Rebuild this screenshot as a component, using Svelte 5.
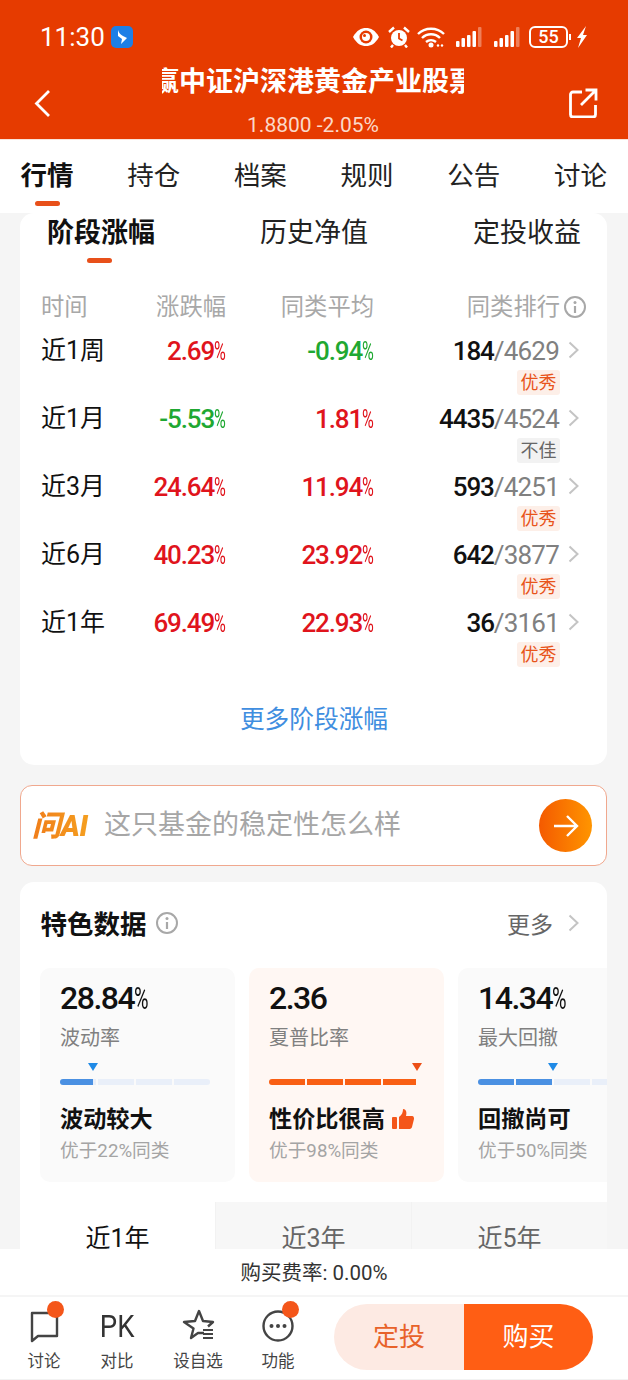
<script>
  const tabs = ['行情', '持仓', '档案', '规则', '公告', '讨论'];
  const subTabs = ['阶段涨幅', '历史净值', '定投收益'];
  const rows = [
    { t: '近1周', a: '2.69', au: 1, b: '-0.94', bu: 0, r: '184', n: '4629', tag: '优秀', good: 1 },
    { t: '近1月', a: '-5.53', au: 0, b: '1.81', bu: 1, r: '4435', n: '4524', tag: '不佳', good: 0 },
    { t: '近3月', a: '24.64', au: 1, b: '11.94', bu: 1, r: '593', n: '4251', tag: '优秀', good: 1 },
    { t: '近6月', a: '40.23', au: 1, b: '23.92', bu: 1, r: '642', n: '3877', tag: '优秀', good: 1 },
    { t: '近1年', a: '69.49', au: 1, b: '22.93', bu: 1, r: '36', n: '3161', tag: '优秀', good: 1 }
  ];
  const cards = [
    { v: '28.84', pct: 1, name: '波动率', mark: 33, fills: [93, 0, 0, 0], head: '波动较大', sub: '优于22%同类', hot: 0 },
    { v: '2.36', pct: 0, name: '夏普比率', mark: 148, fills: [100, 100, 100, 92], head: '性价比很高', sub: '优于98%同类', hot: 1 },
    { v: '14.34', pct: 1, name: '最大回撤', mark: 75, fills: [100, 100, 0, 0], head: '回撤尚可', sub: '优于50%同类', hot: 0 }
  ];
  const periods = ['近1年', '近3年', '近5年'];
</script>

{#snippet chevron()}
  <svg class="chev" viewBox="0 0 11 18" width="11" height="18"><path d="M1.5 1.5 9.5 9l-8 7.5" fill="none" stroke="#c4c4c4" stroke-width="2"/></svg>
{/snippet}
{#snippet info()}
  <svg class="info" viewBox="0 0 24 24" width="24" height="24"><circle cx="12" cy="12" r="10" fill="none" stroke="#a8a8a8" stroke-width="2"/><circle cx="12" cy="7.5" r="1.5" fill="#a8a8a8"/><path d="M12 11v7" stroke="#a8a8a8" stroke-width="2.2"/></svg>
{/snippet}

<div class="page">
  <header class="top">
    <div class="status">
      <div class="status-left">
        <span class="time">11:30</span>
        <svg class="app" viewBox="0 0 22 22" width="22" height="22"><rect width="22" height="22" rx="5" fill="#1d7fe6"/><path d="M7 4c1 3 2 4 5 6l4 2-6 6 1-5-4-3z" fill="#fff"/></svg>
      </div>
      <div class="status-right">
        <svg class="eye" viewBox="0 0 28 20" width="28" height="20"><path d="M1 10C5 3 9 1 14 1s9 2 13 9c-4 7-8 9-13 9S5 17 1 10z" fill="#fff"/><circle cx="14" cy="10" r="6.500" fill="#e63b00"/><circle cx="14" cy="10" r="4" fill="#fff"/><circle cx="12.500" cy="8.500" r="1.500" fill="#e63b00"/></svg>
        <svg class="alarm" viewBox="0 0 22 22" width="22" height="22"><circle cx="11" cy="12" r="8" fill="#fff"/><path d="M11 7v5.500l3.500 2" fill="none" stroke="#e63b00" stroke-width="1.800"/><path d="M1 6 6 1.500M21 6l-5-4.500M5 19l-2 2.500M17 19l2 2.500" stroke="#fff" stroke-width="2.400"/></svg>
        <svg class="wifi" viewBox="0 0 28 22" width="28" height="22"><g fill="none" stroke="#fff" stroke-width="2.400"><path d="M1 8c7-7 19-7 26 0"/><path d="M5 12c5-5 13-5 18 0"/><path d="M9 16c3-2.500 7-2.500 10 0"/></g><circle cx="14" cy="19" r="2.500" fill="#fff"/><circle cx="21" cy="19.500" r="1.200" fill="#fff"/><circle cx="25" cy="19.500" r="1.200" fill="#fff"/></svg>
        <svg class="sig" viewBox="0 0 26 20" width="26" height="20"><g fill="#fff"><rect x="0" y="14" width="3.500" height="6" rx="1"/><rect x="5.500" y="11" width="3.500" height="9" rx="1"/><rect x="11" y="8" width="3.500" height="12" rx="1"/><rect x="16.500" y="4" width="3.500" height="16" rx="1"/></g><rect x="22" y="0" width="3.500" height="20" rx="1" fill="#fff" opacity=".35"/></svg>
        <svg class="sig last" viewBox="0 0 26 20" width="26" height="20"><g fill="#fff"><rect x="0" y="14" width="3.500" height="6" rx="1"/><rect x="5.500" y="11" width="3.500" height="9" rx="1"/><rect x="11" y="8" width="3.500" height="12" rx="1"/><rect x="16.500" y="4" width="3.500" height="16" rx="1"/></g><rect x="22" y="0" width="3.500" height="20" rx="1" fill="#fff" opacity=".35"/></svg>
        <span class="battery">55</span>
        <span class="batt-tip"></span>
        <svg class="bolt" viewBox="0 0 12 22" width="12" height="22"><path d="M10 0 1 12h4l-3 10 9-13H7z" fill="#fff"/></svg>
      </div>
    </div>
    <div class="nav">
      <svg class="back" viewBox="0 0 17 29" width="17" height="29"><path d="M15 2 2.500 14.500 15 27" fill="none" stroke="#fff" stroke-width="2.800"/></svg>
      <div class="title-block">
        <div class="title"><span>赢中证沪深港黄金产业股票</span></div>
        <div class="quote">1.8800 -2.05%</div>
      </div>
      <svg class="share" viewBox="0 0 30 30" width="30" height="30"><path d="M14 4H5a2.500 2.500 0 0 0-2.500 2.500v20A2.500 2.500 0 0 0 5 29h20a2.500 2.500 0 0 0 2.500-2.500V17" fill="none" stroke="#fff" stroke-width="2.800"/><path d="M13 17 27 3M17.500 2H28v10.500" fill="none" stroke="#fff" stroke-width="2.800"/></svg>
    </div>
  </header>

  <nav class="tabs">
    {#each tabs as tab, i}
      <span class="tab" class:on={i === 0}>{tab}</span>
    {/each}
  </nav>

  <main class="scroll">
    <section class="card perf">
      <div class="subtabs">
        {#each subTabs as tab, i}
          <span class="subtab" class:on={i === 0}>{tab}</span>
        {/each}
      </div>
      <div class="grid head">
        <span class="left">时间</span>
        <span>涨跌幅</span>
        <span>同类平均</span>
        <span class="rank-head">同类排行{@render info()}</span>
      </div>
      {#each rows as row}
        <div class="grid row">
          <span class="left period">{row.t}</span>
          <span class="num" class:up={row.au} class:down={!row.au}>{row.a}<span class="pc">%</span></span>
          <span class="num" class:up={row.bu} class:down={!row.bu}>{row.b}<span class="pc">%</span></span>
          <div class="rank">
            <span class="num"><b>{row.r}</b><i>/{row.n}</i></span>
            {@render chevron()}
            <span class="tag" class:good={row.good}>{row.tag}</span>
          </div>
        </div>
      {/each}
      <div class="more-link">更多阶段涨幅</div>
    </section>

    <section class="ask">
      <span class="ai">问AI</span>
      <span class="prompt">这只基金的稳定性怎么样</span>
      <span class="go"><svg viewBox="0 0 26 24" width="26" height="24"><path d="M1 12h23M14 2l10 10-10 10" fill="none" stroke="#fff" stroke-width="2.400"/></svg></span>
    </section>

    <section class="card feat">
      <div class="feat-head">
        <h2>特色数据</h2>
        {@render info()}
        <span class="more">更多</span>
        {@render chevron()}
      </div>
      <div class="metrics">
        {#each cards as c}
          <article class="metric" class:hot={c.hot}>
            <div class="val">{c.v}{#if c.pct}<span class="pc">%</span>{/if}</div>
            <div class="name">{c.name}</div>
            <div class="track">
              <span class="tri" style="left:{c.mark}px"></span>
              {#each c.fills as f}
                <span class="seg"><span class="fill" style="width:{f}%"></span></span>
              {/each}
            </div>
            <div class="verdict">{c.head}{#if c.hot}<svg viewBox="0 0 22 20" width="22" height="20"><rect x="0" y="8" width="5" height="12" rx="1" fill="#f4561a"/><path d="M7 8c3-2 4-5 4-8 3 0 4 3 3 7h6c2 0 2 2 2 3l-2 8c-.5 1.500-1.500 2-3 2H7z" fill="#f4561a"/></svg>{/if}</div>
            <div class="beat">{c.sub}</div>
          </article>
        {/each}
      </div>
      <div class="periods">
        {#each periods as p, i}
          <span class="per" class:on={i === 0}>{p}</span>
        {/each}
      </div>
    </section>
  </main>

  <footer class="foot">
    <div class="fee">购买费率: 0.00%</div>
    <div class="actions">
      <div class="tool">
        <span class="ico dot">
          <svg viewBox="0 0 32 34" width="32" height="34"><path d="M4 4h25v23H10l-6 5z" fill="none" stroke="#444" stroke-width="2.400" stroke-linejoin="round"/></svg>
        </span>
        <span>讨论</span>
      </div>
      <div class="tool">
        <span class="ico"><span class="pk">PK</span></span>
        <span>对比</span>
      </div>
      <div class="tool">
        <span class="ico">
          <svg viewBox="0 0 34 34" width="34" height="34"><path d="M23 24H17l-7 5 2.500-9.500L3 13l11-1L18 2l4 10 10 1-5 4.500" fill="none" stroke="#444" stroke-width="2.400" stroke-linejoin="round"/><path d="M22 21h10M22 25h10M22 29h10" stroke="#444" stroke-width="2"/></svg>
        </span>
        <span>设自选</span>
      </div>
      <div class="tool">
        <span class="ico dot">
          <svg viewBox="0 0 34 34" width="34" height="34"><circle cx="17" cy="17" r="14.500" fill="none" stroke="#444" stroke-width="2.400"/><circle cx="10.500" cy="17" r="2" fill="#444"/><circle cx="17" cy="17" r="2" fill="#444"/><circle cx="23.500" cy="17" r="2" fill="#444"/></svg>
        </span>
        <span>功能</span>
      </div>
      <div class="btns">
        <span class="btn plan">定投</span>
        <span class="btn buy">购买</span>
      </div>
    </div>
  </footer>
</div>

<style>
  :global(body) { margin: 0; background: #f5f5f5; }
  .page {
    width: 628px; height: 1380px; display: flex; flex-direction: column; overflow: hidden;
    font-family: "Roboto", "Noto Sans CJK SC", sans-serif; color: #111;
  }
  .top { height: 140px; box-sizing: border-box; background: #e63b00; color: #fff; flex: none; border-bottom: 1px solid #f9e3d8; }
  .status { height: 60px; display: flex; justify-content: space-between; align-items: center; padding: 14px 40px 0; box-sizing: border-box; }
  .status-left { display: flex; align-items: center; gap: 6px; }
  .time { font-size: 26px; line-height: 30px; }
  .status-right { display: flex; align-items: center; }
  .status-right svg { flex: none; }
  .eye { margin-right: 8px; }
  .alarm { margin-right: 7px; }
  .wifi { margin-right: 11px; }
  .sig { margin-right: 12px; }
  .sig.last { margin-right: 9px; }
  .battery {
    width: 39px; height: 22px; box-sizing: border-box; border: 2px solid #fff; border-radius: 6px;
    font-size: 18px; line-height: 18px; text-align: center; font-weight: 500;
  }
  .batt-tip { width: 2px; height: 6px; background: #fff; margin: 0 5px 0 1px; }
  .nav { height: 79px; position: relative; display: flex; justify-content: space-between; align-items: center; padding: 0 30px 0 34px; }
  .back { margin-top: 7px; }
  .share { margin-top: 7px; }
  .title-block { position: absolute; left: 162px; width: 302px; top: 0; text-align: center; }
  .title { height: 44px; overflow: hidden; white-space: nowrap; font-size: 27px; line-height: 44px; font-weight: 700; text-align: left; }
  .title span { display: inline-block; margin-left: -10px; }
  .quote { font-size: 21px; line-height: 24px; margin-top: 9px; color: #fbd9c9; }

  .tabs {
    height: 73px; background: #fff; flex: none; display: flex; justify-content: space-between;
    padding: 0 21px 0 20.500px; box-sizing: border-box;
  }
  .tab { position: relative; font-size: 26.500px; line-height: 36px; padding-top: 18px; color: #222; }
  .tab.on { font-weight: 700; color: #111; }
  .tab.on::after, .subtab.on::after {
    content: ""; position: absolute; width: 25px; height: 5px; border-radius: 3px; background: #e8501a; left: 50%; margin-left: -12.500px;
  }
  .tab.on::after { top: 61px; }

  .scroll { flex: 1; min-height: 0; overflow: hidden; padding: 0 21px 0 20px; }
  .card { background: #fff; border-radius: 14px; }
  .perf { height: 552px; padding: 1px 20px 0 21px; box-sizing: border-box; }
  .subtabs { display: flex; justify-content: space-between; margin: 0 6px; height: 72px; }
  .subtab { position: relative; font-size: 27px; line-height: 38px; color: #222; }
  .subtab.on { font-weight: 700; color: #111; }
  .subtab.on::after { top: 44px; margin-left: -14.500px; }
  .grid { display: grid; grid-template-columns: 185px 148px 1fr; }
  .grid > * { text-align: right; }
  .grid .left { position: absolute; }
  .head { height: 42px; font-size: 23.300px; line-height: 42px; color: #a8a8a8; margin-bottom: 6px; }
  .rank-head { display: flex; justify-content: flex-end; align-items: center; gap: 3px; }
  .row { height: 68px; font-size: 25px; line-height: 34px; color: #111; }
  .period { font-size: 25px; }
  .num { font-size: 26px; letter-spacing: -1.100px; font-weight: 500; }
  .pc { display: inline-block; transform: scaleX(.62); transform-origin: left; margin-right: -.28em; letter-spacing: 0; font-weight: 400; }
  .up { color: #e0141c; }
  .down { color: #1fa832; }
  .rank { position: relative; padding-right: 28px; }
  .rank b { font-weight: 500; color: #111; }
  .rank i { font-style: normal; font-weight: 400; color: #808080; letter-spacing: -.8px; }
  .rank :global(.chev) { position: absolute; right: 8px; top: 7px; }
  .tag {
    position: absolute; right: 27px; top: 36px; width: 43px; height: 25px; border-radius: 3px;
    font-size: 18px; line-height: 25px; text-align: center; background: #f2f2f2; color: #666; letter-spacing: 0;
  }
  .tag.good { background: #fdefe8; color: #e8541a; }
  .more-link { text-align: center; font-size: 24.700px; line-height: 34px; color: #3f8ee0; margin-top: 29px; }

  .ask {
    height: 81px; margin-top: 20px; box-sizing: border-box; background: #fff; border: 1px solid #f0a88e; border-radius: 12px;
    display: flex; align-items: center; padding: 0 14px 0 13px;
  }
  .ai {
    font-size: 29px; font-weight: 900; font-style: italic; letter-spacing: -.3px; width: 72px; margin: -6px 0 0 -2px;
    background: linear-gradient(90deg, #f07d1a, #f6a821); -webkit-background-clip: text; background-clip: text; color: transparent;
  }
  .prompt { font-size: 27px; color: #a6a6a6; flex: 1; margin-top: -6px; }
  .go {
    width: 53px; height: 53px; border-radius: 50%; background: linear-gradient(90deg, #f45a00, #ff9500);
    display: flex; align-items: center; justify-content: center;
  }

  .feat { margin-top: 16px; height: 400px; overflow: hidden; }
  .feat-head { display: flex; align-items: center; height: 86px; box-sizing: border-box; padding: 0 28px 5px 20.500px; }
  .feat-head h2 { font-size: 26.500px; font-weight: 700; margin: 0 8px 0 0; color: #111; }
  .more { margin-left: auto; font-size: 23px; color: #666; margin-right: 15px; }
  .metrics { display: flex; gap: 14px; padding-left: 20px; }
  .metric {
    flex: none; width: 195px; height: 214px; border-radius: 10px; background: #fafafa; box-sizing: border-box; padding: 11px 0 0 20px;
  }
  .metric.hot { background: #fff7f3; }
  .val { height: 38px; font-size: 32px; line-height: 38px; font-weight: 500; color: #111; letter-spacing: -1.500px; }
  .name { font-size: 20px; line-height: 28px; color: #808080; margin-top: 7px; }
  .track { position: relative; display: flex; gap: 2px; width: 150px; height: 6px; margin-top: 27px; }
  .seg { flex: 1; height: 6px; background: #e9eff9; overflow: hidden; }
  .tri + .seg { border-radius: 3px 0 0 3px; }
  .seg:last-child { border-radius: 0 3px 3px 0; }
  .hot .seg:last-child { background: transparent; }
  .fill { display: block; height: 100%; background: #4a90e2; }
  .hot .fill { background: #f95f13; }
  .tri {
    position: absolute; top: -16px; margin-left: -5px; width: 0; height: 0;
    border-left: 5.500px solid transparent; border-right: 5.500px solid transparent; border-top: 8px solid #1f8ae6;
  }
  .hot .tri { border-top-color: #ec4f16; }
  .verdict { display: flex; align-items: center; gap: 7px; font-size: 23.200px; line-height: 34px; font-weight: 700; color: #111; margin-top: 17px; }
  .beat { font-size: 18.700px; line-height: 26px; color: #a4a4a4; margin-top: 2px; }
  .periods { display: flex; margin-top: 20px; }
  .per { flex: 1; height: 70px; box-sizing: border-box; padding-top: 19px; text-align: center; font-size: 25px; line-height: 36px; background: #f7f7f7; color: #666; border-left: 1px solid #f2f2f2; }
  .per.on { background: #fff; color: #111; border-left: 0; }

  .foot { flex: none; height: 131px; background: #fff; position: relative; }
  .fee { height: 46px; border-bottom: 2px solid #f5f5f5; font-size: 20.500px; line-height: 48px; text-align: center; color: #333; }
  .actions { position: relative; display: flex; align-items: flex-start; height: 82px; border-bottom: 1px solid #f2f2f2; }
  .tool { position: relative; display: flex; flex-direction: column; align-items: center; font-size: 16.500px; line-height: 24px; color: #444; flex: none; }
  .tool:nth-child(1) { width: 88px; }
  .tool:nth-child(2) { width: 58px; }
  .tool:nth-child(3) { width: 104px; }
  .tool:nth-child(4) { width: 56px; }
  .ico { position: relative; height: 38px; margin: 10px 0 5px; display: flex; align-items: center; }
  .dot::after { content: ""; position: absolute; width: 17px; height: 17px; border-radius: 50%; background: #f4561a; right: -4px; top: -6px; }
  .pk { display: block; font-size: 32px; font-weight: 400; color: #333; transform: scaleX(.86); }
  .btns { margin: 7px 0 0 28px; display: flex; width: 259px; height: 66px; border-radius: 33px; overflow: hidden; flex: none; }
  .btn { font-size: 26px; line-height: 66px; text-align: center; }
  .plan { width: 130px; background: #fdeae3; color: #e8622a; }
  .buy { width: 129px; background: #ff5e14; color: #fff; }
</style>
